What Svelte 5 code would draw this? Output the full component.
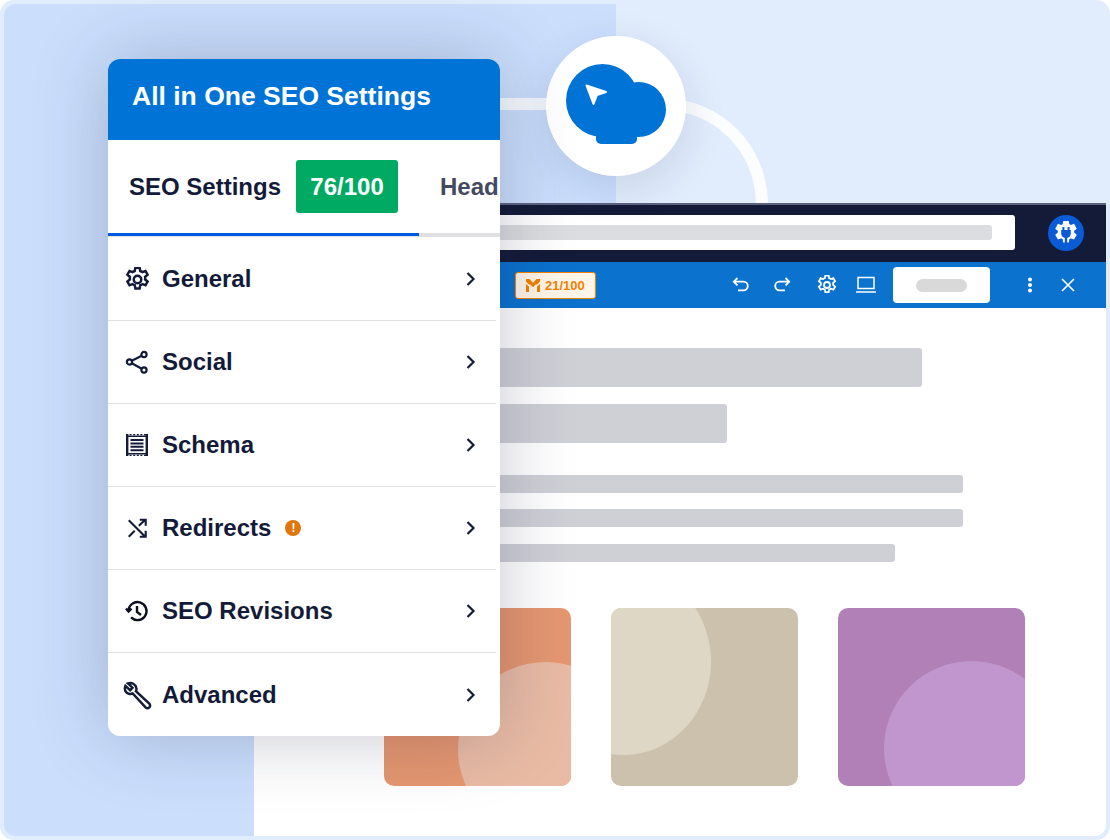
<script lang="ts">
  const rows = [
    { label: "General", icon: "gear" },
    { label: "Social", icon: "share" },
    { label: "Schema", icon: "receipt" },
    { label: "Redirects", icon: "shuffle", warn: true },
    { label: "SEO Revisions", icon: "history" },
    { label: "Advanced", icon: "wrench" },
  ];

  const gearPath =
    "M10.3 2.6h3.4l.5 2.6c.6.2 1.2.5 1.7.9l2.5-.9 1.7 3-2 1.7c.1.7.1 1.3 0 2l2 1.7-1.700 3-2.500-.9c-.5.4-1.1.7-1.7.9l-.5 2.600h-3.400l-.5-2.600c-.6-.2-1.200-.5-1.700-.9l-2.500.9-1.700-3 2-1.700c-.1-.7-.1-1.300 0-2l-2-1.700 1.700-3 2.500.9c.5-.4 1.100-.7 1.700-.9z";
</script>

<div class="scene">
  <div class="left-panel"></div>

  <svg class="connector" width="1110" height="840" viewBox="0 0 1110 840" fill="none">
    <path d="M480 104H660C720 104 762 150 762 205" stroke="#fff" stroke-opacity="0.85" stroke-width="12" />
  </svg>

  <div class="browser">
    <div class="browser-bar">
      <div class="address"><span class="address-fill"></span></div>
      <span class="plugin">
        <svg width="36" height="36" viewBox="0 0 36 36">
          <circle cx="18" cy="18" r="18" fill="#0b5bd7" />
          <g transform="translate(3.600 3.600) scale(1.200)">
            <path fill="#fff" stroke="#fff" stroke-width="1.400" d={gearPath} />
            <path fill="#0b5bd7" d="M9 7h1.700v2.500h2.600V7H15v2.500h1v3c0 1.900-1.300 3.300-3 3.700V21h-2v-4.800c-1.700-.4-3-1.800-3-3.700v-3h1z" />
          </g>
        </svg>
      </span>
    </div>
    <div class="toolbar">
      <div class="score-chip">
        <svg width="14" height="15" viewBox="0 0 14 15" fill="#f18200">
          <path d="M0 1h3.500L7 4.800 10.500 1H14v2.800l-3 2.700h-1.200L7 9.300 4.200 6.500H3L0 3.800z" />
          <path d="M0 6l3 2.500V14H0zM14 6v8h-3V8.500z" />
        </svg>
        <span>21/100</span>
      </div>
      <div class="tools">
        <svg class="tool" width="20" height="20" viewBox="0 0 20 20" fill="none" stroke="#fff" stroke-width="1.800">
          <path d="M6.500 3 2.800 6.700l3.700 3.700M3 6.700h9.500a4.300 4.300 0 0 1 0 8.600H7" />
        </svg>
        <svg class="tool redo" width="20" height="20" viewBox="0 0 20 20" fill="none" stroke="#fff" stroke-width="1.800">
          <path d="M13.500 3l3.700 3.700-3.700 3.700M17 6.700H7.500a4.300 4.300 0 0 0 0 8.600H13" />
        </svg>
        <svg class="tool cog" width="20" height="20" viewBox="2 2 20 20" fill="none" stroke="#fff" stroke-width="1.800">
          <path d={gearPath} />
          <circle cx="12" cy="12" r="3" />
        </svg>
        <svg class="tool laptop" width="22" height="20" viewBox="0 0 22 20" fill="none" stroke="#fff" stroke-width="1.500">
          <path d="M3 2.500h16v11H3z" />
          <path d="M1 17h20" />
        </svg>
        <div class="publish"><span></span></div>
        <svg class="tool dots" width="6" height="16" viewBox="0 0 6 16" fill="#fff">
          <circle cx="3" cy="2.500" r="2" />
          <circle cx="3" cy="8" r="2" />
          <circle cx="3" cy="13.500" r="2" />
        </svg>
        <svg class="tool close" width="14" height="14" viewBox="0 0 14 14" fill="none" stroke="#fff" stroke-width="1.600">
          <path d="M1 1l12 12M13 1 1 13" />
        </svg>
      </div>
    </div>
    <div class="page">
      <div class="block wide"></div>
      <div class="block narrow"></div>
      <div class="lines">
        <div class="line full"></div>
        <div class="line full"></div>
        <div class="line short"></div>
      </div>
      <div class="cards">
        <div class="card orange"><i></i></div>
        <div class="card sand"><i></i></div>
        <div class="card purple"><i></i></div>
      </div>
    </div>
  </div>

  <div class="bubble">
    <svg width="102" height="80" viewBox="0 0 102 80">
      <circle cx="36.500" cy="36.500" r="36.500" fill="#0073d6" />
      <circle cx="72.500" cy="45.500" r="27.500" fill="#0073d6" />
      <path fill="#0073d6" d="M30 50h41v25a5 5 0 0 1-5 5H35a5 5 0 0 1-5-5z" />
      <path fill="#fff" stroke="#fff" stroke-width="2" stroke-linejoin="round" d="M20.500 21.500 40 28l-9 3-3.500 9z" />
    </svg>
  </div>

  <div class="sidebar">
    <div class="sidebar-head">All in One SEO Settings</div>
    <div class="tabs">
      <span class="tab-label">SEO Settings</span>
      <span class="badge">76/100</span>
      <span class="tab-next">Head</span>
    </div>
    <div class="tab-rail"><span></span></div>
    <ul>
      {#each rows as row}
        <li>
          <span class="row-icon">
            {#if row.icon === "gear"}
              <svg width="25" height="25" viewBox="2 2 20 20" fill="none" stroke="#141b38" stroke-width="2">
                <path d={gearPath} />
                <circle cx="12" cy="12" r="3" />
              </svg>
            {:else if row.icon === "share"}
              <svg width="24" height="24" viewBox="0 0 24 24" fill="none" stroke="#141b38" stroke-width="2.200">
                <circle cx="19" cy="4.500" r="2.600" />
                <circle cx="4.500" cy="12" r="2.600" />
                <circle cx="19" cy="20" r="2.600" />
                <path d="M6.800 10.800 16.700 5.800M6.800 13.200 16.700 18.700" />
              </svg>
            {:else if row.icon === "receipt"}
              <svg width="24" height="24" viewBox="0 0 24 24" fill="none" stroke="#141b38">
                <path stroke-width="2.400" d="M2.200 1v22M21.800 1v22" />
                <path stroke-width="1.600" d="M2 3.200h20M2 20.800h20" />
                <path stroke-width="1.400" stroke-dasharray="2 1.600" d="M1 1.600h22M1 22.400h22" />
                <path stroke-width="2" d="M5.500 7h13M5.500 10.400h13M5.500 13.800h13M5.500 17.200h13" />
              </svg>
            {:else if row.icon === "shuffle"}
              <svg width="22" height="22" viewBox="0 0 24 24" fill="none" stroke="#141b38" stroke-width="2.300">
                <path d="M3 3.500 21 21.500M3 21.500l6.500-6.500M14 9.500l7-6.500M15 3h6.500v6.500M21.500 15v6.500H15" />
              </svg>
            {:else if row.icon === "history"}
              <svg width="24" height="24" viewBox="0 0 24 24" fill="none" stroke="#0b0f1f" stroke-width="2.400">
                <path d="M3.500 12a9 9 0 1 1 2.600 6.400" />
                <path d="M1 9.500l2.500 3 3-2.800" />
                <path d="M12 7v6l4 3" />
              </svg>
            {:else}
              <svg width="30" height="30" viewBox="0 0 28 28" fill="none" stroke="#141b38" stroke-width="2.300">
                <path d="M5.500 3.200 9.800 7.200 7.600 9.500 3.200 5.500C1.800 9 3.400 12.600 7 13c1.100.1 2 0 3-.5L22 25.500c1 1 2.500 1 3.500 0s1-2.400 0-3.400L13 10.500c.5-1 .6-2 .4-3C12.800 3.800 9 2 5.500 3.200z" />
              </svg>
            {/if}
          </span>
          <span class="row-label">{row.label}</span>
          {#if row.warn}
            <span class="warn">!</span>
          {/if}
          <svg class="chevron" width="10" height="14" viewBox="0 0 10 14" fill="none" stroke="#141b38" stroke-width="2.200">
            <path d="M1.500 1 7.500 7l-6 6" />
          </svg>
        </li>
      {/each}
    </ul>
  </div>
</div>

<style>
  :global(body) {
    margin: 0;
    background: #fff;
  }

  .scene {
    position: relative;
    width: 1110px;
    height: 840px;
    overflow: hidden;
    border-radius: 14px;
    background: #e1edfd;
    font-family: "Liberation Sans", Arial, sans-serif;
  }

  .left-panel {
    position: absolute;
    left: 4px;
    top: 4px;
    width: 612px;
    height: 832px;
    border-radius: 12px 0 0 12px;
    background: #cbdffd;
  }

  .connector {
    position: absolute;
    left: 0;
    top: 0;
  }

  .browser {
    position: absolute;
    left: 254px;
    top: 203px;
    width: 852px;
    height: 633px;
    overflow: hidden;
    display: flex;
    flex-direction: column;
    border-radius: 0 0 12px 0;
    background: #fff;
  }

  .browser-bar {
    height: 59px;
    flex: none;
    display: flex;
    align-items: center;
    background: #141b38;
    border-top: 2px solid #5d6380;
    box-sizing: border-box;
    padding: 0 22px 2px 232px;
  }

  .address {
    width: 547px;
    height: 35px;
    box-sizing: border-box;
    padding: 10px 23px 10px 10px;
    border-radius: 0 3px 3px 0;
    background: #fff;
  }

  .address-fill {
    display: block;
    height: 15px;
    border-radius: 3px;
    background: #dcdde0;
  }

  .plugin {
    display: block;
    height: 36px;
    margin-left: 33px;
  }

  .toolbar {
    height: 46px;
    flex: none;
    display: flex;
    align-items: center;
    background: #0b72ce;
    padding-left: 261px;
  }

  .score-chip {
    display: flex;
    align-items: center;
    gap: 5px;
    width: 81px;
    height: 27px;
    box-sizing: border-box;
    padding-left: 10px;
    border: 1px solid #f18200;
    border-radius: 3px;
    background: #fff5e8;
    color: #f18200;
    font-size: 13px;
    font-weight: 700;
  }

  .tools {
    display: flex;
    align-items: center;
    margin-left: 135px;
  }

  .tool {
    display: block;
  }

  .redo {
    margin-left: 21px;
  }

  .cog {
    margin-left: 25px;
  }

  .laptop {
    margin-left: 18px;
  }

  .publish {
    width: 97px;
    height: 36px;
    margin-left: 16px;
    display: flex;
    align-items: center;
    justify-content: center;
    border-radius: 4px;
    background: #fff;
  }

  .publish span {
    width: 51px;
    height: 13px;
    border-radius: 7px;
    background: #d9d9d9;
  }

  .dots {
    margin-left: 37px;
  }

  .close {
    margin-left: 28px;
  }

  .page {
    flex: 1;
    box-sizing: border-box;
    padding: 40px 0 0 130px;
    background: #fff;
  }

  .block {
    height: 39px;
    border-radius: 3px;
    background: #cfd0d6;
  }

  .wide {
    width: 538px;
  }

  .narrow {
    width: 343px;
    margin-top: 17px;
  }

  .lines {
    margin-top: 32px;
    display: flex;
    flex-direction: column;
    gap: 16px;
  }

  .line {
    height: 18px;
    border-radius: 3px;
    background: #cfd0d6;
  }

  .full {
    width: 579px;
  }

  .short {
    width: 511px;
    margin-top: 1px;
  }

  .cards {
    margin-top: 46px;
    display: flex;
    gap: 40px;
  }

  .card {
    position: relative;
    width: 187px;
    height: 178px;
    overflow: hidden;
    border-radius: 10px;
  }

  .card i {
    position: absolute;
    display: block;
    border-radius: 50%;
  }

  .orange {
    background: #e59771;
  }

  .orange i {
    left: 74px;
    top: 54px;
    width: 175px;
    height: 175px;
    background: #e9bba5;
  }

  .sand {
    background: #ccc1ac;
  }

  .sand i {
    left: -75px;
    top: -40px;
    width: 175px;
    height: 187px;
    background: #dfd7c5;
  }

  .purple {
    background: #b080b6;
  }

  .purple i {
    left: 46px;
    top: 53px;
    width: 175px;
    height: 175px;
    background: #c196ce;
  }

  .bubble {
    position: absolute;
    left: 546px;
    top: 36px;
    width: 140px;
    height: 140px;
    box-sizing: border-box;
    padding: 28px 0 0 20px;
    border-radius: 50%;
    background: #fff;
    box-shadow: 0 12px 44px rgba(20, 27, 56, 0.12);
  }

  .bubble svg {
    display: block;
  }

  .sidebar {
    position: absolute;
    left: 108px;
    top: 59px;
    width: 392px;
    height: 677px;
    overflow: hidden;
    display: flex;
    flex-direction: column;
    border-radius: 12px;
    background: #fff;
    color: #141b38;
    box-shadow: 0 0 76px rgba(20, 27, 56, 0.24);
  }

  .sidebar-head {
    height: 81px;
    flex: none;
    box-sizing: border-box;
    padding: 21px 0 0 24px;
    background: #0073d6;
    color: #fff;
    font-size: 26.500px;
    font-weight: 700;
    line-height: 32px;
  }

  .tabs {
    height: 93px;
    flex: none;
    display: flex;
    align-items: center;
    white-space: nowrap;
    padding-left: 21px;
    font-size: 24px;
    font-weight: 700;
  }

  .badge {
    width: 102px;
    height: 53px;
    margin-left: 15px;
    display: flex;
    align-items: center;
    justify-content: center;
    flex: none;
    border-radius: 3px;
    background: #00aa63;
    color: #fff;
    font-weight: 700;
  }

  .tab-next {
    margin-left: 42px;
    color: #434960;
  }

  .tab-rail {
    height: 4px;
    flex: none;
    background: #e0e0e3;
  }

  .tab-rail span {
    display: block;
    width: 311px;
    height: 3px;
    background: #005ae0;
  }

  ul {
    list-style: none;
    margin: 0;
    padding: 1px 0 0;
  }

  li {
    height: 83.100px;
    margin-right: 4px;
    display: flex;
    align-items: center;
    box-sizing: border-box;
    padding: 0 20px 0 17px;
    border-bottom: 1px solid #dfe0e3;
  }

  li:last-child {
    border-bottom: 0;
  }

  .row-icon {
    width: 24px;
    height: 24px;
    flex: none;
    display: flex;
    align-items: center;
    justify-content: center;
  }

  .row-icon svg {
    flex: none;
  }

  .row-label {
    margin-left: 13px;
    font-size: 24px;
    font-weight: 700;
  }

  .warn {
    width: 16px;
    height: 16px;
    margin-left: 14px;
    display: flex;
    align-items: center;
    justify-content: center;
    border-radius: 50%;
    background: #df770c;
    color: #fff;
    font-size: 12px;
    font-weight: 700;
  }

  .chevron {
    margin-left: auto;
  }
</style>
